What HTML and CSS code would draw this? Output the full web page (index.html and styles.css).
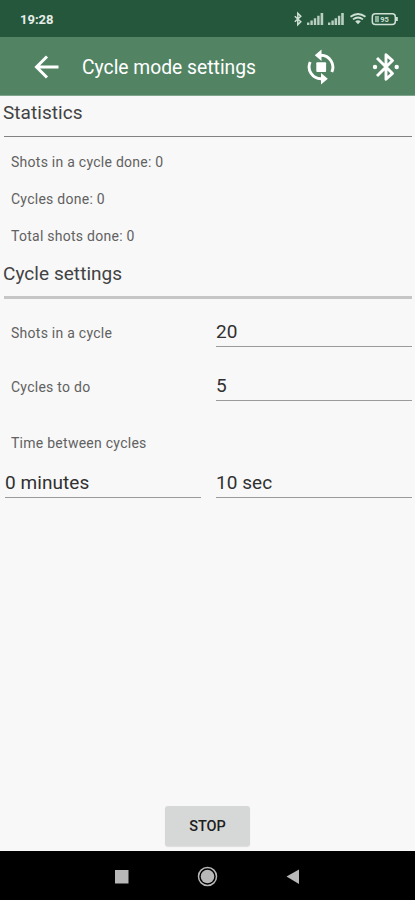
FILE: index.html
```html
<!DOCTYPE html>
<html lang="en">
<head>
<meta charset="utf-8">
<title>Cycle mode settings</title>
<link rel="stylesheet" href="styles.css">
</head>
<body>
<div class="screen">
  <div class="status">
    <span class="clock">19:28</span>
    <svg class="status-icons" width="106" height="18" viewBox="292 10 106 18">
      <path d="M294.800 16.300l6 5.500-3 2.900v-11.400l3 2.900-6 5.500" fill="none" stroke="#cfe0d4" stroke-width="1.500"/>
      <g fill="#b9cfc0">
        <path d="M307 22.500h2.400V25H307zM310.400 20.500h2.400V25h-2.400zM313.800 18.300h2.400V25h-2.400zM317.200 15.800h2.400V25h-2.400zM320.600 13h2.600v12h-2.600z"/>
        <path d="M328 22.500h2.400V25H328zM331.400 20.500h2.400V25h-2.400zM334.600 18.300h2.400V25h-2.400zM337.900 15.800h2.400V25h-2.400zM341.200 13h2.600v12h-2.600z"/>
      </g>
      <g fill="none" stroke="#cfe0d4" stroke-width="1.800">
        <path d="M350.500 16.800q7.500-5.600 15 0M353 19.400q5-3.800 10 0"/>
        <path d="M355.200 21.300q2.800-1.900 5.600 0L358 24.200z" fill="#cfe0d4" stroke="none"/>
        <rect x="372.300" y="13.800" width="23" height="10.600" rx="3" stroke-width="1.500"/>
      </g>
      <path d="M396 17h1.800v4H396z" fill="#cfe0d4"/>
      <path d="M375 16h4v6.200h-4z" fill="#8fb09b"/>
      <text class="charge" x="384.500" y="22.200" text-anchor="middle">95</text>
    </svg>
  </div>
  <header class="bar">
    <svg class="back" width="28" height="28" viewBox="33 53 28 28"><path d="M58.500 67H37M47 56.500L36.500 67 47 77.500" fill="none" stroke="#fff" stroke-width="3"/></svg>
    <h1 class="title">Cycle mode settings</h1>
    <svg class="cycle" width="30" height="38" viewBox="306 48 30 38">
      <path d="M321 55.300A11.800 11.800 0 0 1 331.800 72M321 78.700A11.800 11.800 0 0 1 310.200 62" fill="none" stroke="#fff" stroke-width="2.900"/>
      <path d="M321.500 49.500v11.600L314.800 55.300zM321 73v11.400L327.800 78.700z" fill="#fff"/>
      <rect x="316.300" y="62.200" width="9.800" height="9.800" rx="1" fill="#fff"/>
    </svg>
    <svg class="bt" width="30" height="34" viewBox="371 50 30 34">
      <path d="M377 58l15.500 15.500-6.500 5.700V54.800l6.500 5.700L377 76" fill="none" stroke="#fff" stroke-width="2.900" stroke-linejoin="round"/>
      <circle cx="375" cy="67" r="2.200" fill="#fff"/><circle cx="396.700" cy="67" r="2.200" fill="#fff"/>
    </svg>
  </header>
  <main class="content">
    <h2 class="heading">Statistics</h2>
    <div class="rule"></div>
    <div class="stats">
      <p class="label">Shots in a cycle done: 0</p>
      <p class="label">Cycles done: 0</p>
      <p class="label">Total shots done: 0</p>
    </div>
    <h2 class="heading second">Cycle settings</h2>
    <div class="rule thick"></div>
    <div class="grid">
      <span class="label">Shots in a cycle</span><div class="field">20</div>
      <span class="label">Cycles to do</span><div class="field">5</div>
      <span class="label">Time between cycles</span><span></span>
      <div class="field">0 minutes</div><div class="field">10 sec</div>
    </div>
    <button class="stop">STOP</button>
  </main>
  <nav class="nav">
    <svg width="200" height="24" viewBox="108 863 200 24" fill="#b8b8b8">
      <rect x="115" y="869" width="13.500" height="13.500"/>
      <circle cx="207.500" cy="875.500" r="9" fill="none" stroke="#b8b8b8" stroke-width="1.500"/><circle cx="207.500" cy="875.500" r="6.800"/>
      <path d="M286.500 875.500l12.500-7v14.500z"/>
    </svg>
  </nav>
</div>
</body>
</html>
```
FILE: styles.css
```css
* { box-sizing: border-box; }
body, h1, h2, p { margin: 0; font-weight: 400; }
body { font-family: Roboto, sans-serif; background: #f8f8f8; }
.screen { width: 415px; height: 900px; display: flex; flex-direction: column; overflow: hidden; }
svg { display: block; flex: none; }
.status { height: 37px; flex: none; background: #25573d; display: flex; align-items: center; justify-content: space-between; padding: 1px 17px 0 20px; }
.clock { color: #e5eee8; font-size: 13px; font-weight: 700; line-height: 18px; padding-top: 1px; }
.charge { font-size: 7.500px; font-weight: 700; fill: #cfe0d4; }
.bar { height: 59px; flex: none; background: #528464; border-bottom: 1px solid #7fa58c; display: flex; align-items: center; padding: 1px 14px 0 33px; }
.title { color: #fff; font-size: 19.300px; line-height: 28px; margin-left: 21px; padding-top: 2px; flex: 1; white-space: nowrap; }
.bt { margin-left: 35px; }
.content { flex: 1; display: flex; flex-direction: column; background: #f8f8f8; padding: 0 3px; }
.heading { font-size: 19px; line-height: 24px; height: 24px; margin-top: 5px; letter-spacing: .05px; color: #424242; }
.rule { height: 1px; margin: 11px 0 0 1px; background: #828282; }
.stats { padding: 7px 0 0 8px; }
.label { font-size: 14px; color: #616161; letter-spacing: .26px; white-space: nowrap; }
.stats .label { line-height: 37px; height: 37px; }
.second { margin-top: 7px; }
.thick { height: 3px; background: #c6c6c6; margin-top: 10px; }
.grid { display: grid; grid-template-columns: 196px 196px; column-gap: 15px; grid-template-rows: 48px 54px 56px 41px; padding-left: 2px; }
.grid .label { padding-left: 6px; align-self: end; line-height: 20px; height: 24px; }
.field { align-self: end; border-bottom: 1px solid #9b9b9b; height: 30px; font-size: 19px; line-height: 30px; color: #303030; letter-spacing: .06px; white-space: nowrap; }
.stop { margin: auto auto 5px; width: 85px; height: 40px; border: 0; border-radius: 3px; background: #d6d8d7; box-shadow: 0 1px 1px #ddd; font: 500 14.500px Roboto, sans-serif; color: #202020; padding: 0; }
.nav { height: 49px; flex: none; background: #000; display: flex; justify-content: center; align-items: center; }
```
